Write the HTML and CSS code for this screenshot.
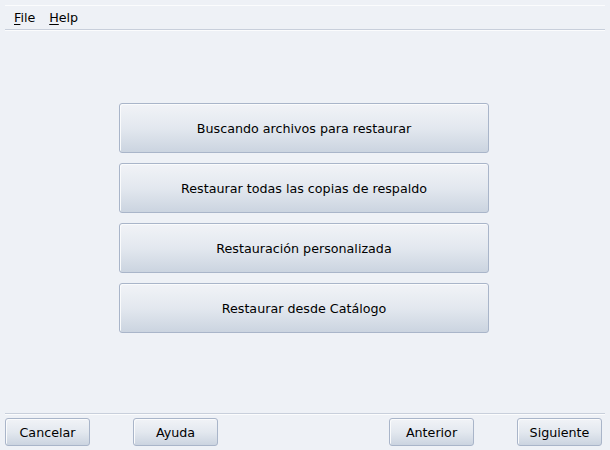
FILE: index.html
```html
<!DOCTYPE html>
<html>
<head>
<meta charset="utf-8">
<link rel="stylesheet" href="styles.css">
</head>
<body>
<div class="window">
  <div class="topline"></div>
  <div class="menubar">
    <span class="menu"><u>F</u>ile</span>
    <span class="menu"><u>H</u>elp</span>
  </div>
  <div class="sep"></div>
  <div class="main">
    <button class="big">Buscando archivos para restaurar</button>
    <button class="big">Restaurar todas las copias de respaldo</button>
    <button class="big">Restauración personalizada</button>
    <button class="big">Restaurar desde Catálogo</button>
  </div>
  <div class="sep"></div>
  <div class="footer">
    <div class="group">
      <button class="small">Cancelar</button>
      <button class="small">Ayuda</button>
    </div>
    <div class="group">
      <button class="small">Anterior</button>
      <button class="small">Siguiente</button>
    </div>
  </div>
</div>
</body>
</html>
```
FILE: styles.css
```css
html, body {
  margin: 0;
  padding: 0;
  background: #eef1f6;
}
.window {
  width: 610px;
  height: 450px;
  display: flex;
  flex-direction: column;
  font-family: "DejaVu Sans", sans-serif;
  font-size: 12.7px;
  color: #000;
}
.topline {
  height: 1px;
  margin: 5px 5px 0 5px;
  background: #fbfcfd;
}
.menubar {
  height: 23px;
  display: flex;
  align-items: center;
  padding-left: 14px;
  gap: 14px;
}
.menu u {
  text-decoration: underline;
  text-underline-offset: 2px;
}
.sep {
  height: 1px;
  margin: 0 5px;
  background: #c8cfdb;
  border-bottom: 1px solid #fbfcfd;
}
.main {
  flex: 1;
  display: flex;
  flex-direction: column;
  align-items: center;
  padding-top: 72px;
  padding-right: 2px;
  gap: 10px;
}
button {
  font-family: inherit;
  font-size: 12.7px;
  color: #000;
  border: 1px solid #a9b5c9;
  border-radius: 3px;
  background: linear-gradient(to bottom, #f1f3f7 0%, #e3e8ef 50%, #cbd4e0 100%);
  padding: 0;
  box-shadow: inset 1px 1px 0 #fafbfc;
}
.big {
  width: 370px;
  height: 50px;
}
.footer {
  height: 35px;
  box-sizing: border-box;
  display: flex;
  justify-content: space-between;
  align-items: flex-start;
  padding: 3px 8px 0 5px;
}
.group {
  display: flex;
  gap: 43px;
}
.small {
  width: 85px;
  height: 28px;
}
```
